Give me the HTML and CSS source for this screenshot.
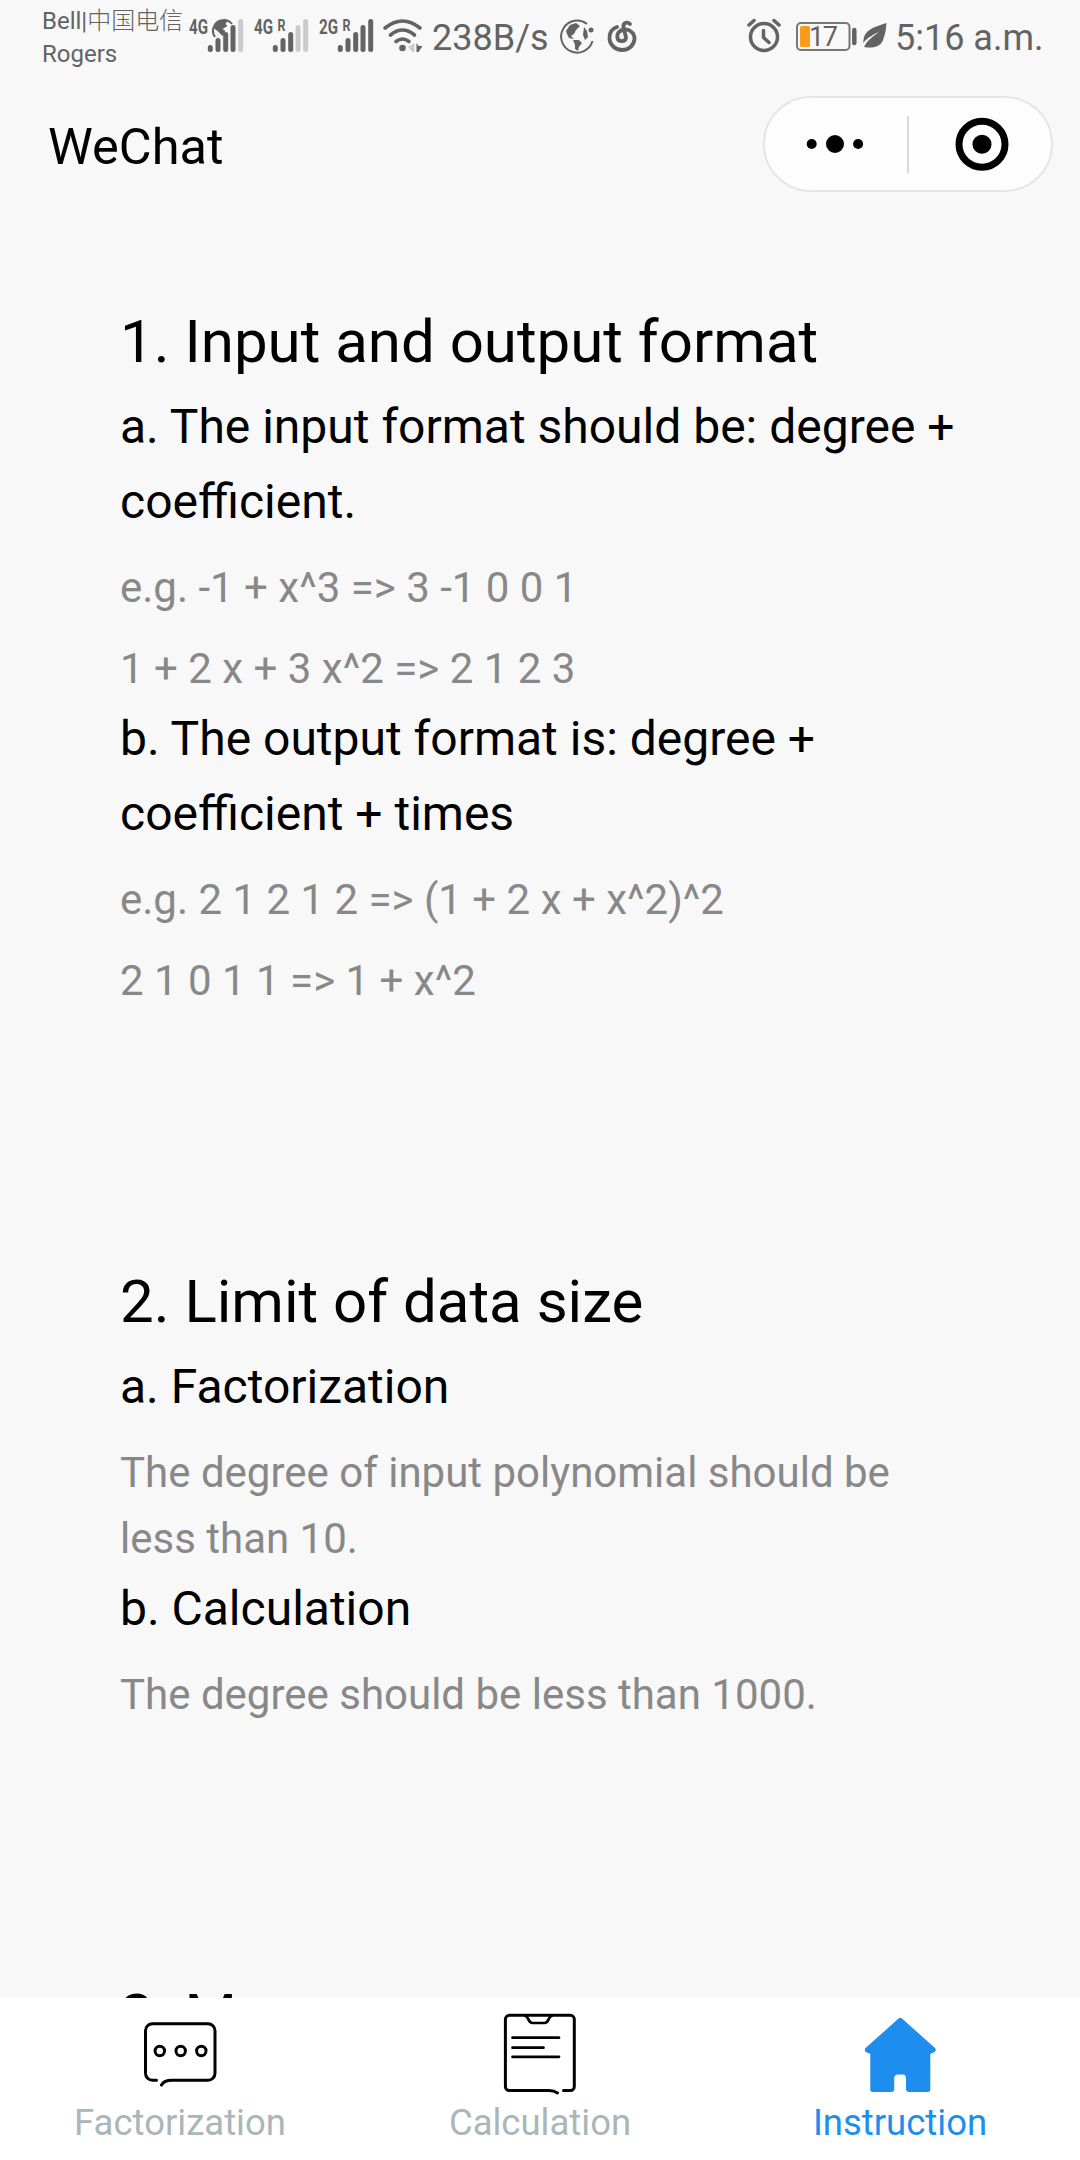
FILE: index.html
```html
<!DOCTYPE html>
<html lang="en">
<head>
<meta charset="utf-8">
<title>Instruction</title>
<link rel="stylesheet" href="styles.css">
</head>
<body>
<div class="screen">
  <header class="status">
    <div class="carrier"><span>Bell|<span class="cjk">中国电信</span></span><span>Rogers</span></div>
    <svg class="signal" viewBox="0 0 56 36">
      <text class="net" x="1" y="16" textLength="19" lengthAdjust="spacingAndGlyphs">4G</text>
      <path class="bars" d="M22.300 31.500v-2M30 31.500v-9M37.700 31.500v-15M45 31.500v-22"/>
      <path class="bars dim" d="M52.700 31.500v-28"/>
      <path class="fill" d="M25.500 10l3-5 5-3 6 1-2 3 2 2-5 3 3 2-3 5-5-5z"/>
      <path class="thin" d="M27 19c-5-7 0-17 9-17 3 0 6 1.500 8 4"/>
    </svg>
    <svg class="signal" viewBox="0 0 56 36">
      <text class="net" x="1" y="16" textLength="19" lengthAdjust="spacingAndGlyphs">4G</text>
      <text class="roam" x="24.500" y="13" textLength="8" lengthAdjust="spacingAndGlyphs">R</text>
      <path class="bars" d="M22.300 31.500v-2M30 31.500v-9M37.700 31.500v-15"/>
      <path class="bars dim" d="M45 31.500v-22M52.700 31.500v-28"/>
    </svg>
    <svg class="signal" viewBox="0 0 56 36">
      <text class="net" x="1" y="16" textLength="19" lengthAdjust="spacingAndGlyphs">2G</text>
      <text class="roam" x="24.500" y="13" textLength="8" lengthAdjust="spacingAndGlyphs">R</text>
      <path class="bars" d="M22.300 31.500v-2M30 31.500v-9M37.700 31.500v-15M45 31.500v-22M52.700 31.500v-28"/>
    </svg>
    <svg class="wifi" viewBox="0 0 40 36">
      <path class="arc" d="M2 10Q19.500-4 37 10M7.500 17Q19.500 7 31.500 17M13 23.500Q19.500 18.500 26 23.500"/>
      <circle class="fill" cx="19.500" cy="30" r="3.300"/>
      <path class="pale" d="M31.500 25v9h-2l-4.500-5z"/>
      <path class="fill" d="M33.500 25v9h2l4-6h-4z"/>
    </svg>
    <span class="speed">238B/s</span>
    <svg class="globe" viewBox="0 0 36 36">
      <path class="thin" d="M28 6A16 16 0 1 0 33.500 23"/>
      <circle class="fill" cx="32" cy="12" r="2.500"/>
      <path class="fill" d="M7 13l4-6 6-2 4 3-4 4-2 4-3 2 3 3-5-1-2-4zM14 22l6 0 3 3-3 4-1 4-3-2v-4zM25 9l3 4 1 6-3 3-2-5z"/>
    </svg>
    <svg class="music" viewBox="0 0 30 34">
      <path class="swirl" d="M10 7C4 9 2 14 2.500 19c.5 6 6 11 12.500 11s12-4.500 12.500-11c.3-6-5-10-10-9.500-5 .5-8 4-7 8.500.8 4 8 4.500 8.500-.5L16.500 7c-.5-4.500 4-5.500 6.500-3"/>
    </svg>
    <svg class="alarm" viewBox="0 0 34 34">
      <circle class="ring" cx="17" cy="18" r="13.500"/>
      <path class="hand" d="M16.500 11.500v7l5.500 5"/>
      <path class="bell" d="M2 6l5-4.500M32 6l-5-4.500"/>
    </svg>
    <svg class="battery" viewBox="0 0 62 30">
      <rect class="shell" x="1" y="1" width="52.500" height="27" rx="4"/>
      <rect class="charge" x="4" y="4" width="10" height="21" rx="1.500"/>
      <text class="pct" x="13" y="24" textLength="29">17</text>
      <path class="nub" d="M58.300 8v13"/>
    </svg>
    <svg class="leaf" viewBox="0 0 24 26">
      <path class="fill" d="M23.500 0C15 3 4 5 1 14L0 20C5 14 12 11 17 8C11 13 5 16 1 24C11 26 18 23 20 17C22 12 23 7 23.500 0z"/>
    </svg>
    <span class="clock">5:16 a.m.</span>
  </header>

  <nav class="nav">
    <span class="app">WeChat</span>
    <div class="capsule">
      <div class="half">
        <svg width="62" height="20" viewBox="0 0 62 20"><circle cx="6.700" cy="10" r="5"/><circle cx="30" cy="10" r="9"/><circle cx="53.100" cy="10" r="5"/></svg>
      </div>
      <div class="divider"></div>
      <div class="half close">
        <svg width="54" height="54" viewBox="0 0 54 54"><circle cx="27" cy="27.300" r="23" fill="none" stroke="#000" stroke-width="7"/><circle cx="27" cy="27.300" r="9.500"/></svg>
      </div>
    </div>
  </nav>

  <main class="content">
    <section class="block">
      <h1 class="title">1. Input and output format</h1>
      <h2 class="sub">a. The input format should be: degree + coefficient.</h2>
      <p class="note">e.g. -1 + x^3 =&gt; 3 -1 0 0 1</p>
      <p class="note">1 + 2 x + 3 x^2 =&gt; 2 1 2 3</p>
      <h2 class="sub">b. The output format is: degree + coefficient + times</h2>
      <p class="note">e.g. 2 1 2 1 2 =&gt; (1 + 2 x + x^2)^2</p>
      <p class="note">2 1 0 1 1 =&gt; 1 + x^2</p>
    </section>
    <section class="block">
      <h1 class="title">2. Limit of data size</h1>
      <h2 class="sub">a. Factorization</h2>
      <p class="note">The degree of input polynomial should be less than 10.</p>
      <h2 class="sub">b. Calculation</h2>
      <p class="note">The degree should be less than 1000.</p>
    </section>
    <section class="block">
      <h1 class="title">3. M</h1>
    </section>
  </main>

  <footer class="tabs">
    <div class="tab">
      <svg class="glyph" viewBox="0 0 88 88">
        <path class="line" d="M20.500 79.300H16.500a7 7 0 0 1-7-7V29.700a7 7 0 0 1 7-7H72a7 7 0 0 1 7 7V72.300a7 7 0 0 1-7 7H36Q28 79.300 25.500 84"/>
        <g class="line"><circle cx="23.800" cy="50" r="4.700"/><circle cx="44.700" cy="50" r="4.700"/><circle cx="65.300" cy="50" r="4.700"/></g>
      </svg>
      <span>Factorization</span>
    </div>
    <div class="tab">
      <svg class="glyph" viewBox="0 0 88 88">
        <path class="line" d="M67.500 89.500H74.300a4 4 0 0 0 4-4V18.300a4 4 0 0 0-4-4H13.400a4 4 0 0 0-4 4V85.500a4 4 0 0 0 4 4H53Q58 89.500 61.500 92"/>
        <path class="line slim" d="M29.500 15C33 16 32 22 36.500 22H48.500C53 22 52 16 55.500 15M16.500 36.700H63M16.500 46.700H47.500M16.500 55.800H63"/>
      </svg>
      <span>Calculation</span>
    </div>
    <div class="tab active">
      <svg class="glyph" viewBox="0 0 88 88">
        <path d="M42.600 17.500Q44.300 16 46 17.500L79.500 47.500Q80.500 51.500 76 52L74.300 53V88.500Q74.300 91 71.500 91H53Q50 91 50 88V77.500Q50 73.500 47 73.500H42Q38.200 73.500 38.200 77.500V88Q38.200 91 35 91H17Q14.300 91 14.300 88.500V53L12.500 52Q8 51.500 9 47.500z"/>
      </svg>
      <span>Instruction</span>
    </div>
  </footer>
</div>
</body>
</html>
```
FILE: styles.css
```css
* { box-sizing: border-box; }
body { margin: 0; background: #f8f8f8; font-family: Roboto, "Noto Sans CJK SC", sans-serif; color: #000; }
.screen { width: 1080px; height: 2160px; overflow: hidden; display: flex; flex-direction: column; }
svg { display: block; flex: none; overflow: visible; }

/* status bar */
.status { height: 72px; flex: none; display: flex; align-items: flex-start; padding-left: 42px; color: #636363; fill: #636363; white-space: nowrap; }
.carrier { width: 146px; display: flex; flex-direction: column; font-size: 24px; line-height: 33px; padding-top: 5px; }
.cjk { font-weight: 300; }
.signal { width: 56px; height: 36px; margin: 18px 9px 0 0; }
.net { font: 700 20px Roboto, sans-serif; }
.roam { font: 700 16px Roboto, sans-serif; }
.bars { fill: none; stroke: #636363; stroke-width: 5; stroke-linecap: round; }
.dim { stroke: #cbcbcb; }
.fill { fill: #636363; }
.pale { fill: #cbcbcb; }
.thin { fill: none; stroke: #636363; stroke-width: 2; }
.wifi { width: 40px; height: 36px; margin: 18px 9px 0 0; }
.arc { fill: none; stroke: #636363; stroke-width: 3.6; stroke-linecap: round; }
.speed, .clock { font-size: 36px; line-height: 42px; padding-top: 17px; }
.speed { width: 127px; }
.globe { width: 36px; height: 36px; margin: 18px 12px 0 0; }
.music { width: 30px; height: 34px; margin-top: 20px; }
.swirl { fill: none; stroke: #636363; stroke-width: 3.8; stroke-linecap: round; }
.alarm { width: 34px; height: 34px; margin: 19px 15px 0 110px; }
.ring { fill: none; stroke: #636363; stroke-width: 3.5; }
.hand, .bell { fill: none; stroke: #636363; stroke-width: 3.5; stroke-linecap: round; }
.battery { width: 62px; height: 30px; margin: 22px 5px 0 0; }
.shell { fill: none; stroke: #777; stroke-width: 2; }
.charge { fill: #ff9a1c; }
.pct { font: 27px Roboto, sans-serif; }
.nub { stroke: #636363; stroke-width: 4.5; stroke-linecap: round; }
.leaf { width: 24px; height: 26px; margin: 23px 8px 0 0; }

/* title bar */
.nav { height: 144px; flex: none; display: flex; justify-content: space-between; align-items: flex-start; padding: 24px 27px 0 48px; }
.app { font-size: 50.5px; line-height: 60px; padding-top: 21px; }
.capsule { width: 290px; height: 96px; border: 2px solid #e5e5e5; border-radius: 48px; background: #fdfdfd; display: flex; align-items: center; }
.half { width: 142px; flex: none; display: flex; justify-content: center; }
.close { padding-left: 4px; }
.divider { width: 2px; height: 57px; background: #d9d9d9; }

/* instructions */
.content { flex: 1; min-height: 0; overflow: hidden; padding: 78px 120px 0; display: flex; flex-direction: column; gap: 240px; }
.block { flex: none; }
.title, .sub, .note { margin: 0; font-weight: 400; }
.title { font-size: 60px; line-height: 96px; margin-bottom: -1px; }
.sub { font-size: 48px; line-height: 75px; }
.note { font-size: 42px; line-height: 66px; margin-top: 15px; color: #888; }
.sub + .note { margin-top: 16px; }
.note + .sub { margin-top: -1px; }

/* tab bar */
.tabs { height: 162px; flex: none; display: flex; background: #fff; }
.tab { flex: 1; display: flex; flex-direction: column; align-items: center; font-size: 36.5px; line-height: 42px; color: #a9b7b7; padding-top: 3px; }
.glyph { width: 88px; height: 88px; margin-bottom: 13px; }
.line { fill: none; stroke: #000; stroke-width: 3; stroke-linecap: round; stroke-linejoin: round; }
.slim { stroke-width: 2.7; }
.active { color: #1d8dee; fill: #1d8dee; }
```
